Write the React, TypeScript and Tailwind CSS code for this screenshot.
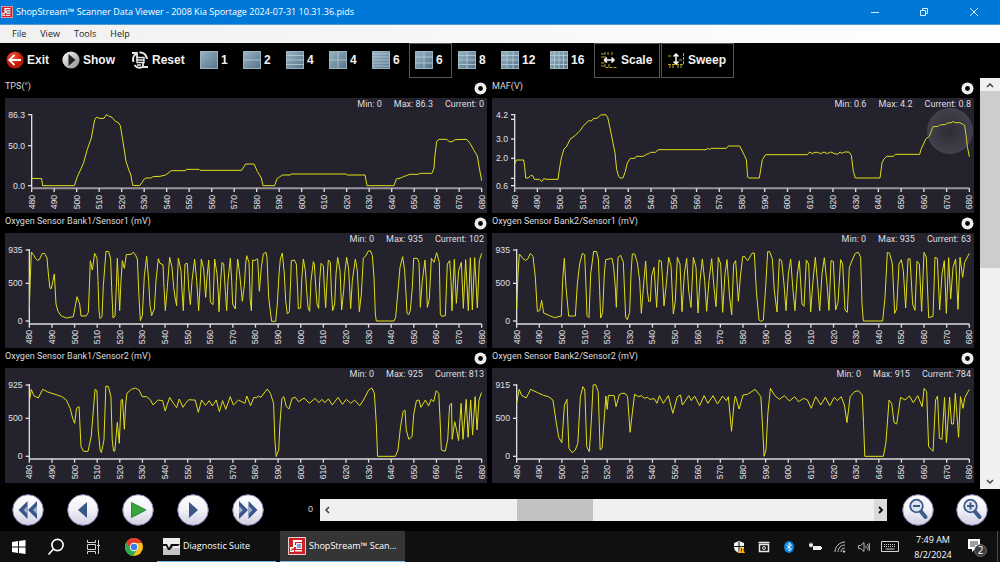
import type { ReactNode } from "react";

type Segment = { dx: number; dy: number; sx?: number; points: string };
type YTick = { y: number; label?: string };
type Chart = {
  title: string;
  min: string;
  max: string;
  current: string;
  x0: number;
  x1: number;
  baseline: number;
  thick?: boolean;
  ticks: YTick[];
  segments: Segment[];
  touch?: boolean;
};

const charts: Chart[] = [
  {
    title: "TPS(°)",
    min: "0",
    max: "86.3",
    current: "0",
    x0: 80,
    x1: 1430,
    baseline: 271,
    thick: true,
    ticks: [{ y: 50, label: "86.3" }, { y: 143, label: "50.0" }, { y: 263, label: "0.0" }],
    segments: [
      {
        dx: -15,
        dy: -60,
        points:
          "95,301 125,302 128,323 223,323 232,296 250,257 262,214 274,180 284,125 290,117 297,121 312,121 319,110 326,114 336,118 346,130 355,134 361,143 368,185 378,250 387,278 392,288 398,322 419,323 425,315 433,303 438,300 454,300 458,296 480,295 497,291 514,278 555,278 560,274 597,274 600,277 725,277 737,258 750,258",
      },
      {
        dx: 735,
        dy: -60,
        points:
          "12,258 22,280 28,290 34,300 39,323 74,323 81,302 88,297 98,291 120,291 124,288 288,288 292,291 345,291 351,323 432,323 439,303 452,300 460,296 472,292 478,289 505,289 510,286 546,286 552,270 554,240 557,215 560,190 567,184 590,184 598,191 606,191 616,185 650,184 660,196 670,214 682,234 688,270 695,308",
      },
    ],
  },
  {
    title: "MAF(V)",
    min: "0.6",
    max: "4.2",
    current: "0.8",
    x0: 68,
    x1: 1432,
    baseline: 271,
    thick: true,
    touch: true,
    ticks: [
      { y: 50, label: "4.2" },
      { y: 64 },
      { y: 123, label: "3.0" },
      { y: 181, label: "2.0" },
      { y: 241 },
      { y: 263, label: "0.6" },
    ],
    segments: [
      {
        dx: -12,
        dy: -60,
        points:
          "80,258 85,246 107,246 110,265 113,300 120,300 128,293 134,293 139,304 155,304 161,311 168,301 172,304 210,304 214,275 220,240 228,213 237,204 246,184 262,172 277,157 285,145 302,128 310,129 317,121 327,121 338,111 353,110 359,118 366,150 374,190 381,225 386,275 392,295 396,300 405,300 412,280 418,255 427,241 441,241 445,235 466,235 475,229 482,227 487,223 502,223 511,215 654,215 659,211 665,214 670,211 715,211 721,204 755,204 768,230",
      },
      {
        dx: 756,
        dy: -60,
        points:
          "0,230 7,245 11,297 14,300 46,300 50,275 55,245 65,230 190,230 197,222 205,227 213,223 221,223 230,227 240,222 250,227 260,222 272,227 281,229 288,222 293,226 302,222 315,222 322,232 328,280 334,300 408,300 414,255 420,243 428,235 448,235 455,229 527,229 532,212 546,182 556,175 567,146 583,145 587,141 605,139 610,135 624,134 628,129 632,134 648,134 662,142 666,170 670,205 676,236",
      },
    ],
  },
  {
    title: "Oxygen Sensor Bank1/Sensor1 (mV)",
    min: "0",
    max: "935",
    current: "102",
    x0: 73,
    x1: 1430,
    baseline: 273,
    ticks: [{ y: 51, label: "935" }, { y: 151, label: "500" }, { y: 264, label: "0" }],
    segments: [
      {
        dx: -15,
        dy: -57,
        points:
          "88,285 91,190 94,114 100,122 107,134 113,139 118,137 127,118 134,119 141,132 146,190 150,223 154,223 159,200 163,180 168,270 174,292 184,306 200,312 220,308 225,280 231,248 239,270 243,306 258,306 265,295 268,220 271,140 277,168 284,118 291,132 294,200 297,290 300,314 306,308 310,215 318,112 326,113 332,135 335,220 339,312 345,306 349,220 352,133 356,220 359,290 363,200 367,140 373,163 379,122 393,121 400,115 407,124 412,135 417,250 421,320 427,305 433,185 440,127 446,200 450,275 455,305 463,285 468,200 475,134 480,148 489,152 492,220 496,290 502,220 509,130 516,160 521,220 526,255 530,275 532,200 535,132 543,170 546,230 550,290 555,150 562,148 566,220 571,272 576,200 584,135 590,200 596,290 600,220 604,135 611,165 617,250 621,190 626,138 629,200 631,265 639,272 644,135 651,180 655,240 657,293 662,200 666,145 671,150 676,230 680,290 684,200 691,133 695,200 698,270 706,285 709,200 713,135 719,180 727,262 733,215 737,150 740,125 747,145 750,240",
      },
      {
        dx: 735,
        dy: -57,
        points:
          "0,250 4,290 8,138 15,140 19,135 23,135 28,232 34,160 40,120 48,115 51,130 56,250 62,300 65,322 77,322 82,270 87,180 91,135 97,117 103,180 107,260 112,300 118,293 122,200 124,140 133,138 139,150 143,230 145,284 152,282 155,200 160,135 166,170 170,230 174,280 179,292 183,200 190,143 193,150 198,230 201,270 206,283 209,200 213,148 220,155 223,220 227,281 231,200 235,138 241,145 244,230 248,290 254,270 258,180 263,130 270,170 275,288 281,230 285,170 290,130 296,165 302,284 307,200 316,135 322,170 328,293 334,240 340,132 348,125 354,112 361,110 367,125 372,190 376,300 379,321 432,321 437,310 444,230 450,160 458,128 464,170 468,240 471,298 476,302 481,290 487,220 491,133 502,133 507,145 511,280 517,200 525,138 529,200 532,280 538,255 544,133 552,145 560,116 568,145 571,300 575,307 586,305 592,150 599,140 603,200 606,290 613,136 619,268 626,170 634,145 640,283 647,137 655,290 661,131 667,288 674,131 682,282 688,140 695,118",
      },
    ],
  },
  {
    title: "Oxygen Sensor Bank2/Sensor1 (mV)",
    min: "0",
    max: "935",
    current: "63",
    x0: 74,
    x1: 1432,
    baseline: 273,
    ticks: [{ y: 51, label: "935" }, { y: 151, label: "500" }, { y: 264, label: "0" }],
    segments: [
      {
        dx: -12,
        dy: -57,
        points:
          "86,285 90,180 94,120 105,134 113,139 120,134 127,118 135,127 142,190 148,292 155,290 161,259 167,297 185,305 200,311 220,306 224,200 229,133 234,220 242,306 262,306 268,210 275,150 283,118 290,122 294,220 297,305 303,311 308,180 317,112 326,113 331,135 335,230 338,312 344,295 349,180 353,137 372,133 377,160 382,220 385,280 390,130 398,124 406,145 410,240 413,310 418,317 425,295 429,180 433,120 440,120 448,145 455,200 460,298 467,210 473,141 478,230 482,262 487,262 491,185 498,160 502,220 506,280 513,138 520,142 524,200 528,276 535,210 542,130 549,155 553,240 556,300 562,260 568,130 576,150 582,293 589,180 596,133 602,230 609,280 616,130 624,160 630,297 636,200 643,135 650,200 656,292 663,200 671,134 678,220 684,278 691,130 698,150 704,295 711,180 717,137 724,240 731,303 737,150 743,140 751,262 758,180 764,128 768,127",
      },
      {
        dx: 756,
        dy: -57,
        points:
          "0,126 11,140 24,118 31,117 37,230 45,318 50,322 58,318 65,220 71,113 77,113 85,135 91,230 99,294 106,135 113,140 120,210 126,290 133,180 140,135 147,230 153,290 160,180 166,140 174,270 180,277 187,138 194,150 200,294 207,200 214,130 221,210 227,291 234,180 241,131 249,210 255,289 261,140 268,142 275,288 282,265 290,137 296,150 303,288 310,295 316,160 326,135 334,118 343,115 350,130 354,270 358,321 416,321 423,250 430,115 437,118 445,150 452,298 458,285 465,150 472,137 478,170 485,282 492,135 498,134 506,270 513,289 519,142 526,150 533,292 540,115 547,130 554,311 567,307 573,130 580,133 587,288 594,180 601,140 607,298 614,131 620,255 627,160 635,135 642,286 648,130 656,190 662,145 676,118",
      },
    ],
  },
  {
    title: "Oxygen Sensor Bank1/Sensor2 (mV)",
    min: "0",
    max: "925",
    current: "813",
    x0: 73,
    x1: 1430,
    baseline: 273,
    ticks: [{ y: 51, label: "925" }, { y: 151, label: "500" }, { y: 265, label: "0" }],
    segments: [
      {
        dx: -15,
        dy: -54,
        sx: 1.9133,
        points:
          "46,155 49,118 53,137 60,144 67,118 75,126 88,134 97,140 104,150 110,175 114,205 117,220 120,175 124,170 127,290 131,304 138,304 143,260 149,118 152,122 154,240 157,300 159,308 163,270 166,108 170,110 174,140 176,270 178,303 180,303 182,260 184,217 187,280 190,150 192,148 195,238 197,165 199,130 206,118 212,114 218,120 223,140 230,140 236,150 240,165 248,150 255,152 259,183 266,142 272,160 277,173 281,147 287,172 291,160 296,149 302,150 306,150 311,187 316,150 322,166 328,152 333,168 339,150 344,185 349,152 354,178 361,140 366,165 374,150 384,160 387,138 393,167 398,142 402,144 405,138 409,142 419,117 424,130 429,160 431,270 433,320 437,300 439,220 442,145 445,140 449,170 453,177 458,145 463,142 468,155 477,144 485,160 494,145 500,158 505,148 509,158 515,147 521,165 530,142 537,163 543,148 550,160 556,150 564,167 570,150 578,120 583,114 587,130 590,220 592,319 620,319 624,300 628,230 632,185 635,180 637,240 641,268 646,260 649,190 653,152 657,150 660,172 667,150 672,168 676,148 680,155 684,122 688,130 690,210 692,300 698,304 702,270 705,165 708,160 709,268 713,215 716,240 719,272 723,160 726,268 731,148 734,262 738,150 741,255 745,140 748,240 751,150 755,128",
      },
    ],
  },
  {
    title: "Oxygen Sensor Bank2/Sensor2 (mV)",
    min: "0",
    max: "915",
    current: "784",
    x0: 74,
    x1: 1432,
    baseline: 273,
    ticks: [{ y: 51, label: "915" }, { y: 151, label: "500" }, { y: 265, label: "0" }],
    segments: [
      {
        dx: -1476,
        dy: -54,
        sx: 1.9133,
        points:
          "810,160 814,118 818,136 825,144 832,118 843,128 852,136 860,140 867,150 872,215 876,262 881,278 885,165 889,148 892,295 897,308 902,300 906,280 910,140 914,110 917,120 920,290 924,305 927,220 930,105 934,104 938,125 941,300 944,295 948,190 950,138 952,178 954,136 963,137 966,170 971,134 975,130 980,130 984,140 988,247 992,180 995,133 1001,140 1006,137 1010,145 1015,142 1019,148 1026,146 1030,160 1034,137 1040,160 1048,137 1055,190 1062,140 1067,135 1070,165 1080,137 1084,152 1089,138 1097,167 1104,137 1110,160 1118,137 1125,162 1133,138 1139,152 1142,140 1147,244 1151,160 1153,138 1159,177 1165,135 1172,133 1184,118 1189,130 1193,140 1196,240 1198,319 1201,300 1204,190 1208,115 1215,137 1222,148 1230,137 1238,153 1246,140 1252,155 1260,145 1266,150 1272,175 1279,140 1287,165 1294,142 1301,167 1308,142 1313,152 1319,140 1324,165 1328,218 1333,140 1340,125 1346,122 1352,135 1354,220 1356,319 1385,319 1389,280 1394,150 1398,160 1402,218 1406,222 1412,142 1419,150 1426,138 1432,158 1439,137 1446,170 1449,115 1453,125 1456,290 1463,304 1467,150 1470,138 1473,265 1477,268 1481,142 1484,278 1489,142 1492,222 1495,222 1498,130 1503,262 1506,140 1510,175 1513,142 1520,118",
      },
    ],
  },
];

function tracePoints(segments: Segment[]) {
  return segments
    .flatMap(({ dx, dy, sx = 1, points }) =>
      points.split(" ").map((p) => {
        const [x, y] = p.split(",").map(Number);
        return `${(x * sx + dx).toFixed(1)},${y + dy}`;
      }),
    )
    .join(" ");
}

const times = Array.from({ length: 21 }, (_, i) => 480 + i * 10);

function ChartPanel({ chart }: { chart: Chart }) {
  const { x0, x1, baseline } = chart;
  return (
    <section className="min-w-0">
      <header className="flex h-5 items-start justify-between">
        <h2 className="pt-0.5 font-['Roboto',sans-serif] text-[9px] leading-3 text-[#dcdcdc]">{chart.title}</h2>
        <button type="button" aria-label={`Options for ${chart.title}`} className="pt-1">
          <svg viewBox="0 0 13 13" className="size-[13px]">
            <circle cx="6.5" cy="6.5" r="6" fill="#eee" />
            <circle cx="6.5" cy="6.5" r="2.4" fill="#050505" />
          </svg>
        </button>
      </header>
      <div className="relative bg-[#24222c]">
        <div className="flex h-3 justify-end gap-3 pr-[3px] font-['Roboto',sans-serif] text-[9px] leading-3 text-[#dedee2]">
          <span>Min: {chart.min}</span>
          <span>Max: {chart.max}</span>
          <span>Current: {chart.current}</span>
        </div>
        <svg viewBox="0 36 1446 309" className="block h-auto w-full" fill="#e0e0e4" fontSize="26">
          <g stroke="#dcdce2" strokeWidth="4">
            <path d={`M${x0} 48V${baseline}`} />
            <path
              d={`M${x0} ${baseline}H${x1}`}
              strokeWidth={chart.thick ? 6 : 4}
              stroke={chart.thick ? "#96949e" : "#dcdce2"}
            />
            {chart.ticks.map((t) => (
              <path key={t.y} d={`M${x0 - 11} ${t.y}H${x0}`} />
            ))}
            {times.map((t, i) => (
              <path key={t} d={`M${x0 + ((x1 - x0) * i) / 20} ${baseline}v11`} />
            ))}
          </g>
          {chart.ticks.map((t) =>
            t.label ? (
              <text key={t.y} x={x0 - 20} y={t.y + 9} textAnchor="end">
                {t.label}
              </text>
            ) : null,
          )}
          {times.map((t, i) => {
            const x = x0 + ((x1 - x0) * i) / 20 + 9;
            return (
              <text key={t} x={x} y="334" transform={`rotate(-90 ${x} 334)`}>
                {t}
              </text>
            );
          })}
          <polyline
            points={tracePoints(chart.segments)}
            fill="none"
            stroke="#e0de1a"
            strokeWidth="3"
            strokeLinejoin="round"
          />
        </svg>
        {chart.touch && (
          <div className="absolute top-2.5 right-px size-[46px] rounded-full bg-[radial-gradient(circle,rgba(150,150,160,0.08)_0%,rgba(150,150,160,0.2)_45%,rgba(150,150,160,0.35)_100%)]" />
        )}
      </div>
    </section>
  );
}

function AppLogo({ className }: { className: string }) {
  return (
    <svg viewBox="0 0 18 18" className={className}>
      <rect width="18" height="18" rx="1" fill="#e9d0d0" />
      <rect x="1" y="1" width="16" height="16" fill="#cf1f26" />
      <path d="M5 3h9v2H7v3h2v2H5z" fill="#fff" />
      <rect x="8" y="6" width="6" height="6" fill="#e6ecf6" />
      <rect x="9" y="7" width="4" height="4" fill="#8a9fc4" />
      <path d="M2 10h4v1.500H3.500V13H6v2H2v-1h2.500v-.5H2zM7 13h7v1.500H7z" fill="#fff" />
    </svg>
  );
}

function ExitIcon() {
  return (
    <svg viewBox="0 0 18 18" className="size-[18px] shrink-0">
      <defs>
        <radialGradient id="exit" cx="40%" cy="30%">
          <stop offset="0" stopColor="#f0573a" />
          <stop offset="1" stopColor="#b91a08" />
        </radialGradient>
      </defs>
      <circle cx="9" cy="9" r="8.6" fill="url(#exit)" />
      <path d="M15 9H3.5M8.5 3.8 3.3 9l5.2 5.2" fill="none" stroke="#fff" strokeWidth="1.8" />
    </svg>
  );
}

function ShowIcon() {
  return (
    <svg viewBox="0 0 18 18" className="size-[18px] shrink-0">
      <defs>
        <linearGradient id="show" x1="0" x2="1" y1="0" y2="1">
          <stop offset="0" stopColor="#fff" />
          <stop offset="1" stopColor="#8a8a8a" />
        </linearGradient>
      </defs>
      <circle cx="9" cy="9" r="8.6" fill="url(#show)" />
      <path d="M6.5 3v12l7-6z" fill="#222" />
    </svg>
  );
}

function ResetIcon() {
  return (
    <svg viewBox="0 0 18 18" className="size-[18px] shrink-0" fill="none" stroke="#e6e6e6">
      <path d="M1 2h5v5M17 16h-5v-5" strokeWidth="1.8" />
      <path d="M5.500 2.500C2.500 4.500 1.500 8 2.500 11M8.500 1.500c4-.5 7 2.500 7.500 6.500M12.500 15.500c-3 2-7 1.500-9-1.500" strokeWidth="2" />
      <path d="M6 6.500h7v5H6zM5 9h8M6 14h4" strokeWidth="1.4" />
    </svg>
  );
}

function LayoutIcon({ cols, rows }: { cols: number; rows: number }) {
  const lines = [
    ...Array.from({ length: cols - 1 }, (_, i) => `M${((i + 1) * 18) / cols} 0V18`),
    ...Array.from({ length: rows - 1 }, (_, i) => `M0 ${((i + 1) * 18) / rows}H18`),
  ].join("");
  return (
    <svg viewBox="0 0 18 18" className="size-[18px] shrink-0">
      <defs>
        <linearGradient id="tile" x1="0" x2="1" y1="0" y2="1">
          <stop offset="0" stopColor="#98b3c3" />
          <stop offset="1" stopColor="#56748a" />
        </linearGradient>
      </defs>
      <rect x="0.5" y="0.5" width="17" height="17" fill="url(#tile)" stroke="#9ab2bf" />
      <path d={lines} stroke="#b4cad6" strokeOpacity="0.85" />
    </svg>
  );
}

function ScaleIcon() {
  return (
    <svg viewBox="0 0 18 18" className="size-[18px] shrink-0" fill="none">
      <path d="M5 1v15.500H17M1 3h3M1 6h3M1 12h3M1 15h3M8 1v3M12 1v4M9 13v3" stroke="#b8a820" strokeDasharray="3 1" />
      <path d="M4 9h10M7 6.500 4.500 9 7 11.500M11.500 6.500 14 9l-2.500 2.500" stroke="#fff" strokeWidth="1.5" />
    </svg>
  );
}

function SweepIcon() {
  return (
    <svg viewBox="0 0 18 18" className="size-[18px] shrink-0" fill="none">
      <path d="M1 13.500h15.500V1M3 14v3M6 14v3M11 14v3M14 14v3M1 5h4M12 9h4" stroke="#b8a820" strokeDasharray="3 1" />
      <path d="M9 3v10M6.500 5.500 9 3l2.500 2.500M6.500 10.500 9 13l2.500-2.500" stroke="#fff" strokeWidth="1.5" />
    </svg>
  );
}

function ToolButton({
  icon,
  label,
  width,
  active,
}: {
  icon: ReactNode;
  label: string;
  width: string;
  active?: boolean;
}) {
  return (
    <button
      type="button"
      className={`flex shrink-0 items-center gap-[3px] border pb-px pl-[5px] text-xs font-bold text-[#f2f2f2] ${width} ${
        active ? "border-[#565656]" : "border-transparent"
      }`}
    >
      {icon}
      <span>{label}</span>
    </button>
  );
}

const layouts = [
  { label: "1", cols: 1, rows: 1, width: "w-[43px]" },
  { label: "2", cols: 1, rows: 2, width: "w-[43px]" },
  { label: "4", cols: 1, rows: 4, width: "w-[43px]" },
  { label: "4", cols: 2, rows: 2, width: "w-[43px]" },
  { label: "6", cols: 1, rows: 6, width: "w-[43px]" },
  { label: "6", cols: 2, rows: 3, width: "w-[43px]", active: true },
  { label: "8", cols: 2, rows: 4, width: "w-[43px]" },
  { label: "12", cols: 3, rows: 4, width: "w-[49px]" },
  { label: "16", cols: 4, rows: 4, width: "w-[50px]" },
];

function RoundButton({ label, children }: { label: string; children: ReactNode }) {
  return (
    <button type="button" aria-label={label} className="shrink-0">
      <svg viewBox="0 0 32 32" className="size-8">
        <defs>
          <linearGradient id="round" x1="0" x2="0" y1="0" y2="1">
            <stop offset="0" stopColor="#fff" />
            <stop offset="0.5" stopColor="#f1f1f8" />
            <stop offset="1" stopColor="#cfcfe2" />
          </linearGradient>
        </defs>
        <circle cx="16" cy="16" r="15.3" fill="url(#round)" stroke="#8580b4" />
        {children}
      </svg>
    </button>
  );
}

function Magnifier({ plus }: { plus?: boolean }) {
  return (
    <g fill="none" stroke="#3d5a8a">
      <path d="m18.500 17 5 6" strokeWidth="4" strokeLinecap="round" />
      <circle cx="14.500" cy="12" r="6.300" strokeWidth="1.8" fill="#dfe6f2" />
      <path d={plus ? "M11 12h7M14.500 8.500v7" : "M11 12h7"} strokeWidth="2" />
    </g>
  );
}

const arrow = "fill-none stroke-[#404040] stroke-[1.5]";

export default function App() {
  return (
    <div className="flex min-h-screen flex-col bg-black font-['Liberation_Sans',sans-serif]">
      <div className="flex h-[25px] items-center border-b border-[#4f9bd9] bg-[#0078d7] font-['Open_Sans','Noto_Sans',sans-serif] text-white">
        <AppLogo className="ml-px size-3 shrink-0" />
        <h1 className="grow pl-[3px] text-[9px] leading-4 whitespace-nowrap">
          ShopStream™ Scanner Data Viewer - 2008 Kia Sportage 2024-07-31 10.31.36.pids
        </h1>
        <button type="button" aria-label="Minimize" className="flex w-[49px] justify-center">
          <svg viewBox="0 0 10 10" className="size-2.5" stroke="#d8ecff"><path d="M1 5.500h8" /></svg>
        </button>
        <button type="button" aria-label="Restore" className="flex w-[49px] justify-center">
          <svg viewBox="0 0 10 10" className="size-2.5" fill="none" stroke="#d8ecff"><path d="M1.500 3.500h5v5h-5zM3.500 3.500v-2h5v5h-2" /></svg>
        </button>
        <button type="button" aria-label="Close" className="flex w-[52px] justify-center">
          <svg viewBox="0 0 10 10" className="size-2.5" stroke="#d8ecff"><path d="m1 1 8 8M9 1 1 9" /></svg>
        </button>
      </div>

      <nav className="flex h-[18px] items-center gap-3.5 bg-linear-to-r from-[#f1f1f1] to-white pl-3 font-['Open_Sans','Noto_Sans',sans-serif] text-[9px] leading-4 text-[#1c1c1c]">
        <button type="button">File</button>
        <button type="button">View</button>
        <button type="button">Tools</button>
        <button type="button">Help</button>
      </nav>

      <div className="flex h-[35px] items-stretch">
        <ToolButton icon={<ExitIcon />} label="Exit" width="w-14" />
        <ToolButton icon={<ShowIcon />} label="Show" width="w-[69px]" />
        <ToolButton icon={<ResetIcon />} label="Reset" width="w-[69px]" />
        {layouts.map((l, i) => (
          <ToolButton
            key={i}
            icon={<LayoutIcon cols={l.cols} rows={l.rows} />}
            label={l.label}
            width={l.width}
            active={l.active}
          />
        ))}
        <ToolButton icon={<ScaleIcon />} label="Scale" width="w-[66px] mr-px" active />
        <ToolButton icon={<SweepIcon />} label="Sweep" width="w-[73px]" active />
      </div>

      <div className="flex grow">
        <main className="grid grow grid-cols-2 content-start gap-x-[5px] pr-1.5 pl-[5px]">
          {charts.map((c) => (
            <ChartPanel key={c.title} chart={c} />
          ))}
        </main>
        <div className="flex w-5 flex-col bg-[#f0f0f0]">
          <button type="button" aria-label="Scroll up" className="flex h-[13px] items-center justify-center">
            <svg viewBox="0 0 8 6" className="h-1.5 w-2"><path d="M1 5 4 2l3 3" className={arrow} /></svg>
          </button>
          <div className="h-[177px] bg-[#cdcdcd]" />
          <button type="button" aria-label="Scroll down" className="mt-auto flex h-[15px] items-center justify-center">
            <svg viewBox="0 0 8 6" className="h-1.5 w-2"><path d="m1 1 3 3 3-3" className={arrow} /></svg>
          </button>
        </div>
      </div>

      <div className="flex h-[42px] items-center px-3">
        <div className="flex gap-[23px]">
          <RoundButton label="Rewind">
            <path d="M15.500 7v18l-9-9zM25 7v18l-9-9z" fill="#3a5686" />
            <path d="M15.500 12v8l-4-4zM25 12v8l-4-4z" fill="#9db0cf" />
          </RoundButton>
          <RoundButton label="Step back"><path d="M20 8v16l-9-8z" fill="#3a5686" /></RoundButton>
          <RoundButton label="Play"><path d="M9.500 8.500v15L24 16z" fill="#35a53c" stroke="#2a8a33" /></RoundButton>
          <RoundButton label="Step forward"><path d="M12 8v16l9-8z" fill="#3a5686" /></RoundButton>
          <RoundButton label="Fast forward">
            <path d="M7 7v18l9-9zM16.500 7v18l9-9z" fill="#3a5686" />
            <path d="M7 12v8l4-4zM16.500 12v8l4-4z" fill="#9db0cf" />
          </RoundButton>
        </div>
        <span className="w-14 pr-[7px] text-right text-[9px] text-[#d8d8d8]">0</span>
        <div className="flex h-[22px] grow items-stretch bg-[#f0f0f0]">
          <button type="button" aria-label="Scroll left" className="flex w-[13px] items-center justify-center">
            <svg viewBox="0 0 6 8" className="h-2 w-1.5"><path d="M5 1 2 4l3 3" className={arrow} /></svg>
          </button>
          <div className="flex grow">
            <div className="w-[34%]" />
            <div className="w-[14%] bg-[#c2c2c2]" />
          </div>
          <button type="button" aria-label="Scroll right" className="flex w-[13px] items-center justify-center bg-[#dadada]">
            <svg viewBox="0 0 6 8" className="h-2 w-1.5"><path d="m1 1 3 3-3 3" fill="none" stroke="#111" strokeWidth="2" /></svg>
          </button>
        </div>
        <div className="flex gap-[22px] pl-[15px]">
          <RoundButton label="Zoom out"><Magnifier /></RoundButton>
          <RoundButton label="Zoom in"><Magnifier plus /></RoundButton>
        </div>
      </div>

      <footer className="flex h-[31px] items-stretch bg-[#101010] font-['Open_Sans','Noto_Sans',sans-serif] text-[9px] text-white">
        <div className="flex items-center pl-3">
          <button type="button" aria-label="Start">
            <svg viewBox="0 0 14 14" className="size-3.5" fill="#fff"><path d="M0 2l6-1v5.500H0zM7 .9 13.500 0v6.500H7zM0 7.500h6V13l-6-1zM7 7.500h6.500V14L7 13.100z" /></svg>
          </button>
          <button type="button" aria-label="Search" className="ml-[21px]">
            <svg viewBox="0 0 18 18" className="size-[18px]" fill="none" stroke="#fff" strokeWidth="1.6"><circle cx="10.500" cy="7" r="5.600" /><path d="m6.500 11-5 5.500" /></svg>
          </button>
          <button type="button" aria-label="Task view" className="ml-[21px]">
            <svg viewBox="0 0 15 14" className="h-3.5 w-[15px]" fill="none" stroke="#d5d5d5"><path d="M1.500 4.500h8v5h-8zM1.500 0v2.500h8V0M1.500 14v-2.500h8V14M12.500 0v14M11 5.500h3" /></svg>
          </button>
          <button type="button" aria-label="Google Chrome" className="ml-6">
            <svg viewBox="0 0 20 20" className="size-[18px]">
              <circle cx="10" cy="10" r="10" fill="#fbc116" />
              <path d="M10 10 1.340 5A10 10 0 0 0 9 20l5-8z" fill="#2da94f" />
              <path d="M10 5.500h9A10 10 0 0 0 1.340 5L6 12z" fill="#e33b2e" />
              <circle cx="10" cy="10" r="4.800" fill="#fff" />
              <circle cx="10" cy="10" r="3.700" fill="#3a7de8" />
            </svg>
          </button>
        </div>
        <button type="button" className="ml-3.5 flex w-[119px] items-center gap-[3px] border-b border-[#76b9ed] pl-1.5">
          <svg viewBox="0 0 17 17" className="size-[17px]">
            <rect width="17" height="17" fill="#ececec" />
            <rect y="10" width="17" height="7" fill="#c4c4c4" />
            <path d="M0 6h4l2 4 2-4h9l-2 2h-5l-3 4H5L3 8H0z" fill="#111" />
          </svg>
          <span>Diagnostic Suite</span>
        </button>
        <button type="button" className="ml-1 flex w-[125px] items-center gap-[3px] border-b border-[#76b9ed] bg-[#353535] pl-2">
          <AppLogo className="size-[18px]" />
          <span className="whitespace-nowrap">ShopStream™ Scan...</span>
        </button>
        <div className="ml-auto flex items-center">
          <button type="button" aria-label="Windows Security" className="mr-[13px]">
            <svg viewBox="0 0 12 12" className="size-3"><path d="M6 0 11 2v4c0 3-2 5-5 6-3-1-5-3-5-6V2z" fill="#f4f4f4" /><path d="M6 1v10M1 5.500h10" stroke="#101010" /><path d="m8.500 5 3.500 7H5z" fill="#f7b500" /><path d="M8.500 7.500v2M8.500 10.500v.7" stroke="#222" /></svg>
          </button>
          <button type="button" aria-label="Camera" className="mr-[13px]">
            <svg viewBox="0 0 12 12" className="size-3" fill="none" stroke="#e8e8e8"><path d="M.5 1.500h11M1.500 3.500h9v7h-9z" strokeWidth="1.5" /><circle cx="6" cy="7" r="1.500" /></svg>
          </button>
          <button type="button" aria-label="Bluetooth" className="mr-3.5">
            <svg viewBox="0 0 12 12" className="size-3"><ellipse cx="6" cy="6" rx="5" ry="6" fill="#0a84e8" /><path d="m3.500 4 5 4L6 10V2l2.500 2-5 4" fill="none" stroke="#fff" strokeWidth=".9" /></svg>
          </button>
          <button type="button" aria-label="Battery" className="mr-3">
            <svg viewBox="0 0 13 12" className="h-3 w-[13px]"><path d="M4 5h8v4H4z" fill="#f0f0f0" /><path d="M12.500 6v2" stroke="#f0f0f0" /><path d="M.5 3h3v2l-1 1h-1l-1-1zM1 1.500V3M3 1.500V3" fill="#f0f0f0" stroke="#f0f0f0" strokeWidth=".7" /></svg>
          </button>
          <button type="button" aria-label="Network" className="mr-3">
            <svg viewBox="0 0 12 12" className="size-3" fill="none" stroke="#c4c4c4"><path d="M1 11C1 5.500 5.500 1 11 1M4 11c0-4 3-7 7-7M7 11c0-2.500 1.500-4 4-4" /><circle cx="10" cy="10.500" r=".8" fill="#fff" /></svg>
          </button>
          <button type="button" aria-label="Volume" className="mr-[11px]">
            <svg viewBox="0 0 12 12" className="size-3" fill="none" stroke="#c4c4c4"><path d="M.5 4.500h2L6 1.500v9L2.500 7.500h-2zM8 4.500v3M9.500 3c1 2 1 4 0 6M11 2c1 2.500 1 5.500 0 8" strokeWidth=".9" /></svg>
          </button>
          <button type="button" aria-label="Keyboard">
            <svg viewBox="0 0 18 11" className="h-[11px] w-[18px]" fill="none" stroke="#d4d4d4"><path d="M.5.5h17v10H.5z" /><path d="M3 3.500h12M3 5.500h12" strokeDasharray="1 1" /><path d="M4.500 8h9" /></svg>
          </button>
          <div className="w-[68px] text-center leading-[15px]">
            <div>7:49 AM</div>
            <div>8/2/2024</div>
          </div>
          <button type="button" aria-label="Notifications, 2 new">
            <svg viewBox="0 0 20 20" className="size-5">
              <path d="M1 2h12v10H8l-3 3v-3H1z" fill="#fff" />
              <path d="M3 5h8M3 7h8M3 9h5" stroke="#101010" strokeWidth=".8" />
              <circle cx="13.500" cy="13.500" r="6" fill="#3c3c3c" stroke="#909090" strokeWidth=".6" />
              <text x="13.500" y="17" textAnchor="middle" fontSize="10" fill="#fff">2</text>
            </svg>
          </button>
          <div className="mr-0.5 ml-2.5 h-[31px] w-px bg-[#4a4a4a]" />
        </div>
      </footer>
    </div>
  );
}
